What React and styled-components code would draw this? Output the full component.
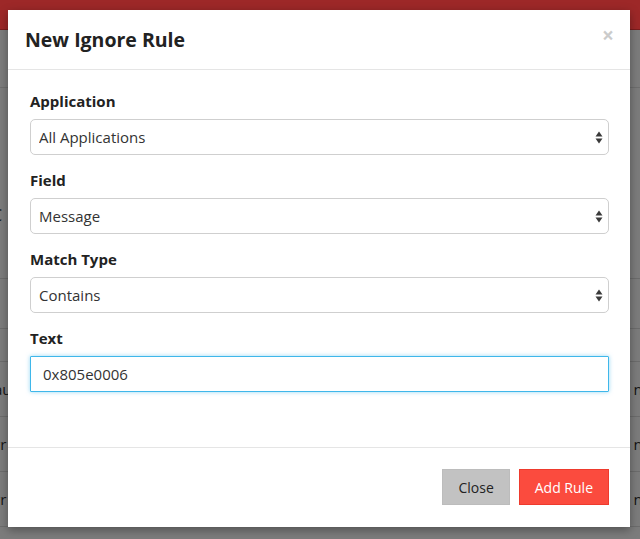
import React from "react";
import styled, { createGlobalStyle } from "styled-components";

const GlobalStyle = createGlobalStyle`
  html, body { margin: 0; padding: 0; }
  body {
    font-family: "Open Sans", "Liberation Sans", sans-serif;
    background: #7c7c7c;
    color: #222;
  }
  * { box-sizing: border-box; }
`;

const Page = styled.div`
  position: relative;
  width: 640px;
  height: 539px;
  overflow: hidden;
  background: #7c7c7c;
`;

const NavBar = styled.div`
  height: 30px;
  background: #9d2828;
  border-bottom: 1px solid #7a1d1d;
`;

const PageHead = styled.div`
  height: 58px;
  border-bottom: 1px solid #6e6e6e;
`;

const Heading = styled.div`
  height: 168px;
  display: flex;
  align-items: flex-end;
  padding: 0 0 30px 0;
  font-size: 16px;
  color: #151515;
  margin-left: -8px;
`;

const Table = styled.div`
  display: flex;
  flex-direction: column;
`;

const Row = styled.div`
  height: ${(p) => p.$h}px;
  border-bottom: 1px solid #6c6c6c;
  display: flex;
  align-items: center;
  justify-content: space-between;
  font-size: 15px;
  color: #141414;
`;

const LeftCell = styled.span`
  margin-left: -6px;
`;

const RightCell = styled.span`
  margin-right: -10px;
  color: ${(p) => (p.$link ? "#174963" : "#141414")};
`;

const Modal = styled.div`
  position: absolute;
  left: 8px;
  top: 10px;
  width: 622px;
  height: 517px;
  background: #fff;
  box-shadow: 0 3px 9px rgba(0, 0, 0, 0.35);
  display: flex;
  flex-direction: column;
`;

const Header = styled.div`
  height: 60px;
  padding: 0 16px 0 17px;
  border-bottom: 1px solid #e5e5e5;
  display: flex;
  align-items: center;
  justify-content: space-between;
`;

const Title = styled.h4`
  margin: 0;
  font-size: 19.5px;
  font-weight: 700;
  line-height: 28px;
  color: #222;
`;

const CloseX = styled.button`
  border: 0;
  background: none;
  padding: 0;
  margin-top: -9px;
  font-family: "Open Sans", sans-serif;
  font-size: 21px;
  font-weight: 700;
  line-height: 1;
  color: #000;
  opacity: 0.2;
  cursor: pointer;
`;

const Body = styled.div`
  flex: 1;
  padding: 21px 21px 0 22px;
  display: flex;
  flex-direction: column;
  gap: 15px;
`;

const Group = styled.div`
  display: flex;
  flex-direction: column;
`;

const Label = styled.label`
  font-size: 15px;
  font-weight: 700;
  line-height: 21px;
  margin-bottom: 7px;
  color: #222;
`;

const SelectWrap = styled.div`
  position: relative;
  height: 36px;
`;

const Select = styled.select`
  appearance: none;
  -webkit-appearance: none;
  width: 100%;
  height: 36px;
  border: 1px solid #cfcfcf;
  border-radius: 5px;
  background: #fff;
  padding: 0 30px 0 8px;
  font-family: "Open Sans", sans-serif;
  font-size: 15px;
  color: #333;
  outline: none;
`;

const Arrows = styled.svg`
  position: absolute;
  right: 6px;
  top: 12px;
  pointer-events: none;
`;

const Input = styled.input`
  width: 100%;
  height: 36px;
  border: 1px solid #3fb7ea;
  border-radius: 1px;
  box-shadow: 0 0 4px rgba(63, 183, 234, 0.55);
  padding: 0 12px;
  font-family: "Open Sans", sans-serif;
  font-size: 15px;
  color: #333;
  outline: none;
`;

const Footer = styled.div`
  height: 80px;
  border-top: 1px solid #e5e5e5;
  padding: 21px 21px 0;
  display: flex;
  align-items: flex-start;
  justify-content: flex-end;
  gap: 9px;
`;

const Button = styled.button`
  height: 36px;
  padding: 0 15px;
  border: 1px solid ${(p) => (p.$primary ? "#ee3a2d" : "#bcbcbc")};
  background: ${(p) => (p.$primary ? "#fb4b3e" : "#c2c2c2")};
  color: ${(p) => (p.$primary ? "#fff" : "#222")};
  font-family: "Open Sans", sans-serif;
  font-size: 14px;
  cursor: pointer;
`;

const fields = [
  { label: "Application", value: "All Applications" },
  { label: "Field", value: "Message" },
  { label: "Match Type", value: "Contains" },
];

function UpDown() {
  return (
    <Arrows width="8" height="13" viewBox="0 0 8 13">
      <path d="M4 0.5 L7.5 5.5 L0.5 5.5 Z" fill="#3a3a3a" />
      <path d="M4 12.5 L7.5 7.5 L0.5 7.5 Z" fill="#3a3a3a" />
    </Arrows>
  );
}

export default function App() {
  return (
    <>
      <GlobalStyle />
      <Page>
        <NavBar />
        <PageHead />
        <Heading>C</Heading>
        <Table>
          <Row $h={23} />
          <Row $h={50}>
            <LeftCell />
            <RightCell $link>a</RightCell>
          </Row>
          <Row $h={33} />
          <Row $h={55}>
            <LeftCell>au</LeftCell>
            <RightCell>nc</RightCell>
          </Row>
          <Row $h={55}>
            <LeftCell>rr</LeftCell>
            <RightCell>nc</RightCell>
          </Row>
          <Row $h={55}>
            <LeftCell>rr</LeftCell>
            <RightCell>nc</RightCell>
          </Row>
        </Table>

        <Modal>
          <Header>
            <Title>New Ignore Rule</Title>
            <CloseX aria-label="Close">×</CloseX>
          </Header>
          <Body>
            {fields.map((f) => (
              <Group key={f.label}>
                <Label>{f.label}</Label>
                <SelectWrap>
                  <Select defaultValue={f.value}>
                    <option>{f.value}</option>
                  </Select>
                  <UpDown />
                </SelectWrap>
              </Group>
            ))}
            <Group>
              <Label>Text</Label>
              <Input defaultValue="0x805e0006" />
            </Group>
          </Body>
          <Footer>
            <Button>Close</Button>
            <Button $primary>Add Rule</Button>
          </Footer>
        </Modal>
      </Page>
    </>
  );
}
